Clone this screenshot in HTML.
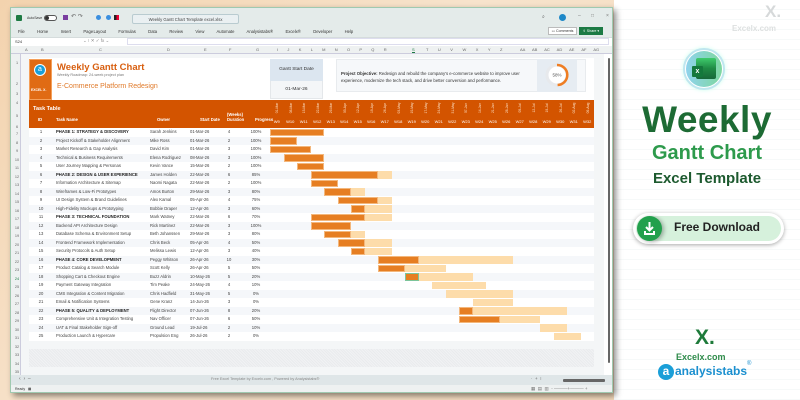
<!DOCTYPE html>
<html><head><meta charset="utf-8"><style>
*{box-sizing:border-box;margin:0;padding:0}
body{width:800px;height:400px;overflow:hidden;position:relative;font-family:"Liberation Sans",sans-serif;background:linear-gradient(135deg,#f3d3ae,#f7e3cc 40%,#f2d6b6);}
.a{position:absolute;white-space:nowrap}
#right{position:absolute;left:614px;top:0;width:186px;height:400px;background:repeating-linear-gradient(180deg,#fff 0,#fff 9px,#eef3f3 10px);}
#win{position:absolute;left:10px;top:7px;width:603px;height:386px;background:#e4ebea;border:1px solid #9fc9b0;box-shadow:3px 3px 6px rgba(0,0,0,.45);overflow:hidden}
.t{font-size:4.5px;color:#333}
.row{position:relative;height:8.5px;font-size:4.2px;color:#444;line-height:8.5px}
.row:nth-child(even){background:#f5f7fa}
.row:nth-child(odd){background:#fff}
.row span{position:absolute;white-space:nowrap}
.c1{left:0;width:24px;text-align:center}
.c2{left:27px}
.c3{left:121px}
.c4{left:161px}
.c5{left:192px;width:16px;text-align:center}
.c6{left:216px;width:22px;text-align:center}
.b{font-weight:bold;color:#222}
.d{position:absolute;top:.5px;height:7.5px;background:#e67e22;border:.5px solid #f3b77c}
.l{position:absolute;top:.5px;height:7.5px;background:#fddcaa}
.wk{position:absolute;top:0;width:13.5px;height:28px;color:#fff;font-size:4px;text-align:center}
.wk i{display:block;font-style:normal;transform:rotate(-90deg);position:absolute;top:6px;left:-1px;width:16px;font-size:3.3px;color:#fde3c8}
.wk b{position:absolute;top:19px;left:0;width:13.5px;font-weight:normal;font-size:4px}
.rh{position:absolute;left:2px;width:8px;text-align:center;font-size:3.8px;color:#666}
.ch{position:absolute;top:0;font-size:4px;color:#666}
</style></head><body>

<div id="right">
 <div class="a" style="left:151px;top:2px;font-size:17px;font-weight:bold;color:#d6d9da">X.</div>
 <div class="a" style="left:118px;top:24px;font-size:8px;font-weight:bold;color:#dde0e0">Excelx.com</div>
 <div class="a" style="left:69px;top:48px;width:42px;height:42px;border-radius:50%;background:#fff;border:2px solid #bfe6ef;box-shadow:0 0 4px #cfe"></div>
 <div class="a" style="left:72px;top:51px;width:36px;height:36px;border-radius:50%;background:linear-gradient(90deg,#8fd3ec,#7ed7a0)"></div>
 <div class="a" style="left:82px;top:58px;width:20px;height:21px;border-radius:2px;background:linear-gradient(180deg,#3ecb6c,#1f8a44 50%,#17683a)"></div>
 <div class="a" style="left:78px;top:66px;width:11px;height:11px;border-radius:1px;background:#14783c;color:#fff;font-size:7px;font-weight:bold;text-align:center;line-height:11px">x</div>
 <div class="a" style="left:0;width:186px;text-align:center;top:99px;font-size:37px;font-weight:bold;color:#1d6b34;letter-spacing:.5px">Weekly</div>
 <div class="a" style="left:0;width:186px;text-align:center;top:142px;font-size:20px;font-weight:bold;color:#2d9a4c">Gantt Chart</div>
 <div class="a" style="left:0;width:186px;text-align:center;top:170px;font-size:15px;font-weight:bold;color:#1d5a2f">Excel Template</div>
 <div class="a" style="left:19px;top:213px;width:151px;height:31px;border-radius:16px;background:#fff;box-shadow:0 1px 4px rgba(0,0,0,.35)"></div>
 <div class="a" style="left:22px;top:216px;width:145px;height:25px;border-radius:13px;background:#d6f1dc"></div>
 <div class="a" style="left:23px;top:216px;width:25px;height:25px;border-radius:50%;background:#22a04c;box-shadow:2px 1px 4px rgba(0,0,0,.3)">
  <svg width="25" height="25" viewBox="0 0 25 25"><path d="M12.5 6v8M9 11l3.5 3.5L16 11M8 15v3h9v-3" stroke="#fff" stroke-width="2" fill="none"/></svg></div>
 <div class="a" style="left:60px;top:220px;font-size:12px;font-weight:bold;color:#222">Free Download</div>
 <div class="a" style="left:81px;top:326px;font-size:21px;font-weight:bold;color:#1e7a3a">X.</div>
 <div class="a" style="left:62px;top:352px;font-size:9px;font-weight:bold;color:#2e8b4a">Excelx.com</div>
 <div class="a" style="left:44px;top:364px;width:16px;height:16px;border-radius:50%;background:#1a9fd8;color:#fff;font-size:12px;text-align:center;line-height:15px;font-weight:bold">a</div>
 <div class="a" style="left:61px;top:364px;font-size:12px;font-weight:bold;color:#1a8fcf">analysistabs</div>
 <div class="a" style="left:133px;top:361px;font-size:6px;color:#1a8fcf">®</div>
</div>

<div id="win">
 <!-- title bar -->
 <div class="a" style="left:5px;top:7px;width:6px;height:6px;background:#1d7a43;border-radius:1px"></div>
 <div class="a t" style="left:16px;top:8px;font-size:3.5px">AutoSave</div>
 <div class="a" style="left:33px;top:7px;width:13px;height:6px;border-radius:3px;border:.5px solid #555;background:#fff"></div>
 <div class="a" style="left:34px;top:8px;width:4px;height:4px;border-radius:50%;background:#333"></div>
 <div class="a" style="left:52px;top:7px;width:5px;height:5px;background:#7a3ea0"></div>
 <div class="a t" style="left:60px;top:5px;font-size:6px;color:#666">↶ ↷</div>
 <div class="a" style="left:85px;top:7px;width:5px;height:5px;border-radius:50%;background:#3b8fe0"></div>
 <div class="a" style="left:95px;top:7px;width:5px;height:5px;border-radius:50%;background:#3b8fe0"></div>
 <div class="a" style="left:103px;top:7px;width:5px;height:5px;background:linear-gradient(90deg,#222 50%,#e03 50%)"></div>
 <div class="a" style="left:121px;top:6px;width:107px;height:10px;border:.5px solid #b9cbd0;border-radius:2px;background:#eaf0f2;font-size:4.2px;color:#444;text-align:center;line-height:10px">Weekly Gantt Chart Template excel.xlsx</div>
 <div class="a t" style="left:531px;top:6px;font-size:5px;color:#555">⌕</div>
 <div class="a" style="left:548px;top:6px;width:7px;height:7px;border-radius:50%;background:#1e88c8"></div>
 <div class="a t" style="left:567px;top:5px;font-size:5px;color:#777">–</div>
 <div class="a t" style="left:580px;top:5px;font-size:5px;color:#777">□</div>
 <div class="a t" style="left:595px;top:5px;font-size:5px;color:#777">×</div>
 <!-- ribbon -->
 <div class="a t" style="left:7px;top:21px;font-size:4.2px;word-spacing:5px">File&nbsp; Home&nbsp; Insert&nbsp; Page&#8202;Layout&nbsp; Formulas&nbsp; Data&nbsp; Review&nbsp; View&nbsp; Automate&nbsp; Analysistabs®&nbsp; Excelx®&nbsp; Developer&nbsp; Help</div>
 <div class="a" style="left:537px;top:19px;width:29px;height:8px;background:#fff;border:.5px solid #bbb;font-size:3.6px;color:#333;line-height:7px;text-align:center">▭ Comments</div>
 <div class="a" style="left:568px;top:19px;width:24px;height:8px;background:#1c7a44;font-size:3.6px;color:#fff;line-height:8px;text-align:center">⇪ Share ▾</div>
 <!-- formula bar -->
 <div class="a" style="left:0;top:29px;width:603px;height:9px;background:#fff;border-top:.5px solid #d5dcdc"></div>
 <div class="a t" style="left:4px;top:31px;font-size:4px">S24</div>
 <div class="a t" style="left:72px;top:30px;font-size:4.5px;color:#888">⌄ ⁝ ✕ ✓ fx ⌄</div>
 <div class="a" style="left:116px;top:30px;width:482px;height:7px;border:.5px solid #dde"></div>
 <!-- column headers -->
 <div class="a" style="left:0;top:38px;width:603px;height:8px;background:#eef1f1;border-bottom:.5px solid #ccd">
  <span class="ch" style="left:14px;top:1px">A</span><span class="ch" style="left:30px;top:1px">B</span><span class="ch" style="left:88px;top:1px">C</span><span class="ch" style="left:156px;top:1px">D</span><span class="ch" style="left:193px;top:1px">E</span><span class="ch" style="left:218px;top:1px">F</span><span class="ch" style="left:245px;top:1px">G</span>
  <span class="ch" style="left:266px;top:1px;word-spacing:8.2px">I J K L M N O P Q R</span>
  <span class="ch" style="left:401px;top:1px;color:#1c7a44;border-bottom:1px solid #1c7a44">S</span>
  <span class="ch" style="left:415px;top:1px;word-spacing:8.4px">T U V W X Y Z</span>
  <span class="ch" style="left:509px;top:1px;word-spacing:6px">AA AB AC AD AE AF AG</span>
 </div>
 <!-- grid area -->
 <div class="a" style="left:0;top:46px;width:596px;height:321px;background:#f4f6f7"></div>
 <div class="a" style="left:0;top:46px;width:10px;height:321px;background:#eef1f1;border-right:.5px solid #ccd"></div>
 <div class="a" style="left:593px;top:46px;width:10px;height:321px;background:#fff"></div>
 <div class="a" style="left:597px;top:50px;width:2px;height:305px;background:#666;border-radius:1px"></div>
 <div class="rh" style="top:53px">1</div><div class="rh" style="top:74px">2</div><div class="rh" style="top:84px">3</div><div class="rh" style="top:93px">4</div><div class="rh" style="top:106px">5</div><div class="rh" style="top:117px">6</div>
 <div class="a" style="left:2px;top:122px;width:8px;font-size:3.8px;color:#666;text-align:center;line-height:8.5px;white-space:normal">7<br>8<br>9<br>10<br>11<br>12<br>13<br>14<br>15<br>16<br>17<br>18<br>19<br>20<br>21<br>22<br>23<br><span style="color:#1c7a44">24</span><br>25<br>26<br>27<br>28<br>29<br>30<br>31<br>32<br>33<br>34<br>35</div>

 <!-- header card -->
 <div class="a" style="left:18px;top:50px;width:565px;height:42px;background:#fff"></div>
 <div class="a" style="left:18px;top:51px;width:23px;height:41px;background:#e06b14;border:1px solid #f5a05a"></div>
 <div class="a" style="left:23px;top:56px;width:12px;height:12px;border-radius:50%;background:#1a9fd8;border:1px solid #fff;color:#fff;font-size:7px;text-align:center;line-height:10px">a</div>
 <div class="a" style="left:20px;top:80px;font-size:3.4px;color:#fff;font-weight:bold">EXCEL X.</div>
 <div class="a" style="left:46px;top:54px;font-size:9.5px;font-weight:bold;color:#d85f10">Weekly Gantt Chart</div>
 <div class="a" style="left:46px;top:65px;font-size:3.8px;color:#777">Weekly Roadmap: 24-week project plan</div>
 <div class="a" style="left:46px;top:75px;font-size:7px;color:#e07a2a">E-Commerce Platform Redesign</div>
 <div class="a" style="left:259px;top:51px;width:53px;height:40px;background:#f4f6f8;border:.5px solid #e4e7ea"></div>
 <div class="a" style="left:259px;top:51px;width:53px;height:22px;background:#dce6f0;font-size:4.8px;color:#333;text-align:center;line-height:22px">Gantt Start Date</div>
 <div class="a" style="left:259px;top:73px;width:53px;height:18px;font-size:4.8px;color:#333;text-align:center;line-height:18px">01-Mar-26</div>
 <div class="a" style="left:325px;top:51px;width:250px;height:33px;background:#f6f8fa;border:.5px solid #e8ebee"></div>
 <div class="a" style="left:330px;top:62px;font-size:4.3px;color:#333;line-height:7px"><b>Project Objective:</b> Redesign and rebuild the company's e-commerce website to improve user<br>experience, modernize the tech stack, and drive better conversion and performance.</div>
 <div class="a" style="left:526px;top:51px;width:40px;height:33px;background:#e6ecf2"></div>
 <svg class="a" style="left:532px;top:53px" width="28" height="28" viewBox="0 0 28 28"><circle cx="14" cy="14" r="10" fill="#fff" stroke="#e7e9ec" stroke-width="3"/><path d="M14 4 A10 10 0 0 1 14.6 24" fill="none" stroke="#ef7d22" stroke-width="2.5"/><text x="14" y="15.5" font-size="4.5" text-anchor="middle" fill="#555" font-family="Liberation Sans">58%</text></svg>

 <!-- orange header band -->
 <div class="a" style="left:18px;top:92px;width:565px;height:28px;background:#d35400"></div>
 <div class="a" style="left:22px;top:98px;font-size:5.5px;font-weight:bold;color:#fff">Task Table</div>
 <div class="a" style="left:18px;top:109px;width:251px;font-size:4.2px;color:#fff;font-weight:bold">
  <span class="a" style="left:9px;top:0">ID</span><span class="a" style="left:27px;top:0">Task Name</span><span class="a" style="left:128px;top:0">Owner</span><span class="a" style="left:171px;top:0">Start Date</span><span class="a" style="left:198px;top:-5px">(Weeks)</span><span class="a" style="left:198px;top:0">Duration</span><span class="a" style="left:226px;top:0">Progress</span></div>
 <div class="a" style="left:259px;top:92px;width:324px;height:28px">
  <div class="wk" style="left:0"><i>01-Mar</i><b>W9</b></div><div class="wk" style="left:13.5px"><i>08-Mar</i><b>W10</b></div><div class="wk" style="left:27px"><i>15-Mar</i><b>W11</b></div><div class="wk" style="left:40.5px"><i>22-Mar</i><b>W12</b></div><div class="wk" style="left:54px"><i>29-Mar</i><b>W13</b></div><div class="wk" style="left:67.5px"><i>05-Apr</i><b>W14</b></div><div class="wk" style="left:81px"><i>12-Apr</i><b>W15</b></div><div class="wk" style="left:94.5px"><i>19-Apr</i><b>W16</b></div><div class="wk" style="left:108px"><i>26-Apr</i><b>W17</b></div><div class="wk" style="left:121.5px"><i>03-May</i><b>W18</b></div><div class="wk" style="left:135px"><i>10-May</i><b>W19</b></div><div class="wk" style="left:148.5px"><i>17-May</i><b>W20</b></div><div class="wk" style="left:162px"><i>24-May</i><b>W21</b></div><div class="wk" style="left:175.5px"><i>31-May</i><b>W22</b></div><div class="wk" style="left:189px"><i>07-Jun</i><b>W23</b></div><div class="wk" style="left:202.5px"><i>14-Jun</i><b>W24</b></div><div class="wk" style="left:216px"><i>21-Jun</i><b>W25</b></div><div class="wk" style="left:229.5px"><i>28-Jun</i><b>W26</b></div><div class="wk" style="left:243px"><i>05-Jul</i><b>W27</b></div><div class="wk" style="left:256.5px"><i>12-Jul</i><b>W28</b></div><div class="wk" style="left:270px"><i>19-Jul</i><b>W29</b></div><div class="wk" style="left:283.5px"><i>26-Jul</i><b>W30</b></div><div class="wk" style="left:297px"><i>02-Aug</i><b>W31</b></div><div class="wk" style="left:310.5px"><i>09-Aug</i><b>W32</b></div>
 </div>

 <!-- rows -->
 <div class="a" style="left:18px;top:120px;width:565px">
  <div class="row"><span class="c1">1</span><span class="c2 b">PHASE 1: STRATEGY &amp; DISCOVERY</span><span class="c3">Sarah Jenkins</span><span class="c4">01-Mar-26</span><span class="c5">4</span><span class="c6">100%</span><div class="d" style="left:241px;width:54px"></div></div>
  <div class="row"><span class="c1">2</span><span class="c2">Project Kickoff &amp; Stakeholder Alignment</span><span class="c3">Mike Ross</span><span class="c4">01-Mar-26</span><span class="c5">2</span><span class="c6">100%</span><div class="d" style="left:241px;width:27px"></div></div>
  <div class="row"><span class="c1">3</span><span class="c2">Market Research &amp; Gap Analysis</span><span class="c3">David Kim</span><span class="c4">01-Mar-26</span><span class="c5">3</span><span class="c6">100%</span><div class="d" style="left:241px;width:40.5px"></div></div>
  <div class="row"><span class="c1">4</span><span class="c2">Technical &amp; Business Requirements</span><span class="c3">Elena Rodriguez</span><span class="c4">08-Mar-26</span><span class="c5">3</span><span class="c6">100%</span><div class="d" style="left:254.5px;width:40.5px"></div></div>
  <div class="row"><span class="c1">5</span><span class="c2">User Journey Mapping &amp; Personas</span><span class="c3">Kevin Vance</span><span class="c4">15-Mar-26</span><span class="c5">2</span><span class="c6">100%</span><div class="d" style="left:268px;width:27px"></div></div>
  <div class="row"><span class="c1">6</span><span class="c2 b">PHASE 2: DESIGN &amp; USER EXPERIENCE</span><span class="c3">James Holden</span><span class="c4">22-Mar-26</span><span class="c5">6</span><span class="c6">85%</span><div class="l" style="left:281.5px;width:81px"></div><div class="d" style="left:281.5px;width:67.5px"></div></div>
  <div class="row"><span class="c1">7</span><span class="c2">Information Architecture &amp; Sitemap</span><span class="c3">Naomi Nagata</span><span class="c4">22-Mar-26</span><span class="c5">2</span><span class="c6">100%</span><div class="d" style="left:281.5px;width:27px"></div></div>
  <div class="row"><span class="c1">8</span><span class="c2">Wireframes &amp; Low-Fi Prototypes</span><span class="c3">Amos Burton</span><span class="c4">29-Mar-26</span><span class="c5">3</span><span class="c6">80%</span><div class="l" style="left:295px;width:40.5px"></div><div class="d" style="left:295px;width:27px"></div></div>
  <div class="row"><span class="c1">9</span><span class="c2">UI Design System &amp; Brand Guidelines</span><span class="c3">Alex Kamal</span><span class="c4">05-Apr-26</span><span class="c5">4</span><span class="c6">75%</span><div class="l" style="left:308.5px;width:54px"></div><div class="d" style="left:308.5px;width:40.5px"></div></div>
  <div class="row"><span class="c1">10</span><span class="c2">High-Fidelity Mockups &amp; Prototyping</span><span class="c3">Bobbie Draper</span><span class="c4">12-Apr-26</span><span class="c5">3</span><span class="c6">60%</span><div class="l" style="left:322px;width:40.5px"></div><div class="d" style="left:322px;width:13.5px"></div></div>
  <div class="row"><span class="c1">11</span><span class="c2 b">PHASE 3: TECHNICAL FOUNDATION</span><span class="c3">Mark Watney</span><span class="c4">22-Mar-26</span><span class="c5">6</span><span class="c6">70%</span><div class="l" style="left:281.5px;width:81px"></div><div class="d" style="left:281.5px;width:54px"></div></div>
  <div class="row"><span class="c1">12</span><span class="c2">Backend API Architecture Design</span><span class="c3">Rick Martinez</span><span class="c4">22-Mar-26</span><span class="c5">3</span><span class="c6">100%</span><div class="d" style="left:281.5px;width:40.5px"></div></div>
  <div class="row"><span class="c1">13</span><span class="c2">Database Schema &amp; Environment Setup</span><span class="c3">Beth Johanssen</span><span class="c4">29-Mar-26</span><span class="c5">3</span><span class="c6">80%</span><div class="l" style="left:295px;width:40.5px"></div><div class="d" style="left:295px;width:27px"></div></div>
  <div class="row"><span class="c1">14</span><span class="c2">Frontend Framework Implementation</span><span class="c3">Chris Beck</span><span class="c4">05-Apr-26</span><span class="c5">4</span><span class="c6">50%</span><div class="l" style="left:308.5px;width:54px"></div><div class="d" style="left:308.5px;width:27px"></div></div>
  <div class="row"><span class="c1">15</span><span class="c2">Security Protocols &amp; Auth Setup</span><span class="c3">Melissa Lewis</span><span class="c4">12-Apr-26</span><span class="c5">3</span><span class="c6">40%</span><div class="l" style="left:322px;width:40.5px"></div><div class="d" style="left:322px;width:13.5px"></div></div>
  <div class="row"><span class="c1">16</span><span class="c2 b">PHASE 4: CORE DEVELOPMENT</span><span class="c3">Peggy Whitson</span><span class="c4">26-Apr-26</span><span class="c5">10</span><span class="c6">30%</span><div class="l" style="left:349px;width:135px"></div><div class="d" style="left:349px;width:40.5px"></div></div>
  <div class="row"><span class="c1">17</span><span class="c2">Product Catalog &amp; Search Module</span><span class="c3">Scott Kelly</span><span class="c4">26-Apr-26</span><span class="c5">5</span><span class="c6">50%</span><div class="l" style="left:349px;width:67.5px"></div><div class="d" style="left:349px;width:27px"></div></div>
  <div class="row"><span class="c1">18</span><span class="c2">Shopping Cart &amp; Checkout Engine</span><span class="c3">Buzz Aldrin</span><span class="c4">10-May-26</span><span class="c5">5</span><span class="c6">20%</span><div class="l" style="left:376px;width:67.5px"></div><div class="d" style="left:376px;width:13.5px;border:.7px solid #7cc49a"></div></div>
  <div class="row"><span class="c1">19</span><span class="c2">Payment Gateway Integration</span><span class="c3">Tim Peake</span><span class="c4">24-May-26</span><span class="c5">4</span><span class="c6">10%</span><div class="l" style="left:403px;width:54px"></div></div>
  <div class="row"><span class="c1">20</span><span class="c2">CMS Integration &amp; Content Migration</span><span class="c3">Chris Hadfield</span><span class="c4">31-May-26</span><span class="c5">5</span><span class="c6">0%</span><div class="l" style="left:416.5px;width:67.5px"></div></div>
  <div class="row"><span class="c1">21</span><span class="c2">Email &amp; Notification Systems</span><span class="c3">Gene Kranz</span><span class="c4">14-Jun-26</span><span class="c5">3</span><span class="c6">0%</span><div class="l" style="left:443.5px;width:40.5px"></div></div>
  <div class="row"><span class="c1">22</span><span class="c2 b">PHASE 5: QUALITY &amp; DEPLOYMENT</span><span class="c3">Flight Director</span><span class="c4">07-Jun-26</span><span class="c5">8</span><span class="c6">20%</span><div class="l" style="left:430px;width:108px"></div><div class="d" style="left:430px;width:13.5px"></div></div>
  <div class="row"><span class="c1">23</span><span class="c2">Comprehensive Unit &amp; Integration Testing</span><span class="c3">Nav Officer</span><span class="c4">07-Jun-26</span><span class="c5">6</span><span class="c6">50%</span><div class="l" style="left:430px;width:81px"></div><div class="d" style="left:430px;width:40.5px"></div></div>
  <div class="row"><span class="c1">24</span><span class="c2">UAT &amp; Final Stakeholder Sign-off</span><span class="c3">Ground Lead</span><span class="c4">19-Jul-26</span><span class="c5">2</span><span class="c6">10%</span><div class="l" style="left:511px;width:27px"></div></div>
  <div class="row"><span class="c1">25</span><span class="c2">Production Launch &amp; Hypercare</span><span class="c3">Propulsion Eng</span><span class="c4">26-Jul-26</span><span class="c5">2</span><span class="c6">0%</span><div class="l" style="left:524.5px;width:27px"></div></div>
 </div>
 <!-- hatched band -->
 <div class="a" style="left:18px;top:341px;width:565px;height:18px;background:repeating-linear-gradient(45deg,#e9ebed 0,#e9ebed 1px,#f1f2f4 1px,#f1f2f4 2px)"></div>
 <!-- sheet tabs -->
 <div class="a" style="left:0;top:367px;width:603px;height:10px;background:#dfe6e8"></div>
 <div class="a t" style="left:8px;top:368px;font-size:5px;color:#666">‹ &nbsp;› &nbsp;–</div>
 <div class="a" style="left:200px;top:369px;font-size:3.8px;color:#888">Free Excel Template by Excelx.com , Powered by Analysistabs®</div>
 <div class="a t" style="left:520px;top:368px;font-size:4.5px;color:#666">· &nbsp;+ &nbsp;⁝</div>
 <div class="a" style="left:552px;top:371px;width:42px;height:2.5px;background:#666;border-radius:1px"></div>
 <!-- status bar -->
 <div class="a" style="left:0;top:377px;width:603px;height:9px;background:#eef1f1"></div>
 <div class="a t" style="left:4px;top:379px;font-size:3.5px">Ready &nbsp;&nbsp;▦</div>
 <div class="a t" style="left:520px;top:378px;font-size:4.5px;color:#777">▦ &nbsp;▤ &nbsp;▥ &nbsp;- ———+——— +</div>
</div>
</body></html>
